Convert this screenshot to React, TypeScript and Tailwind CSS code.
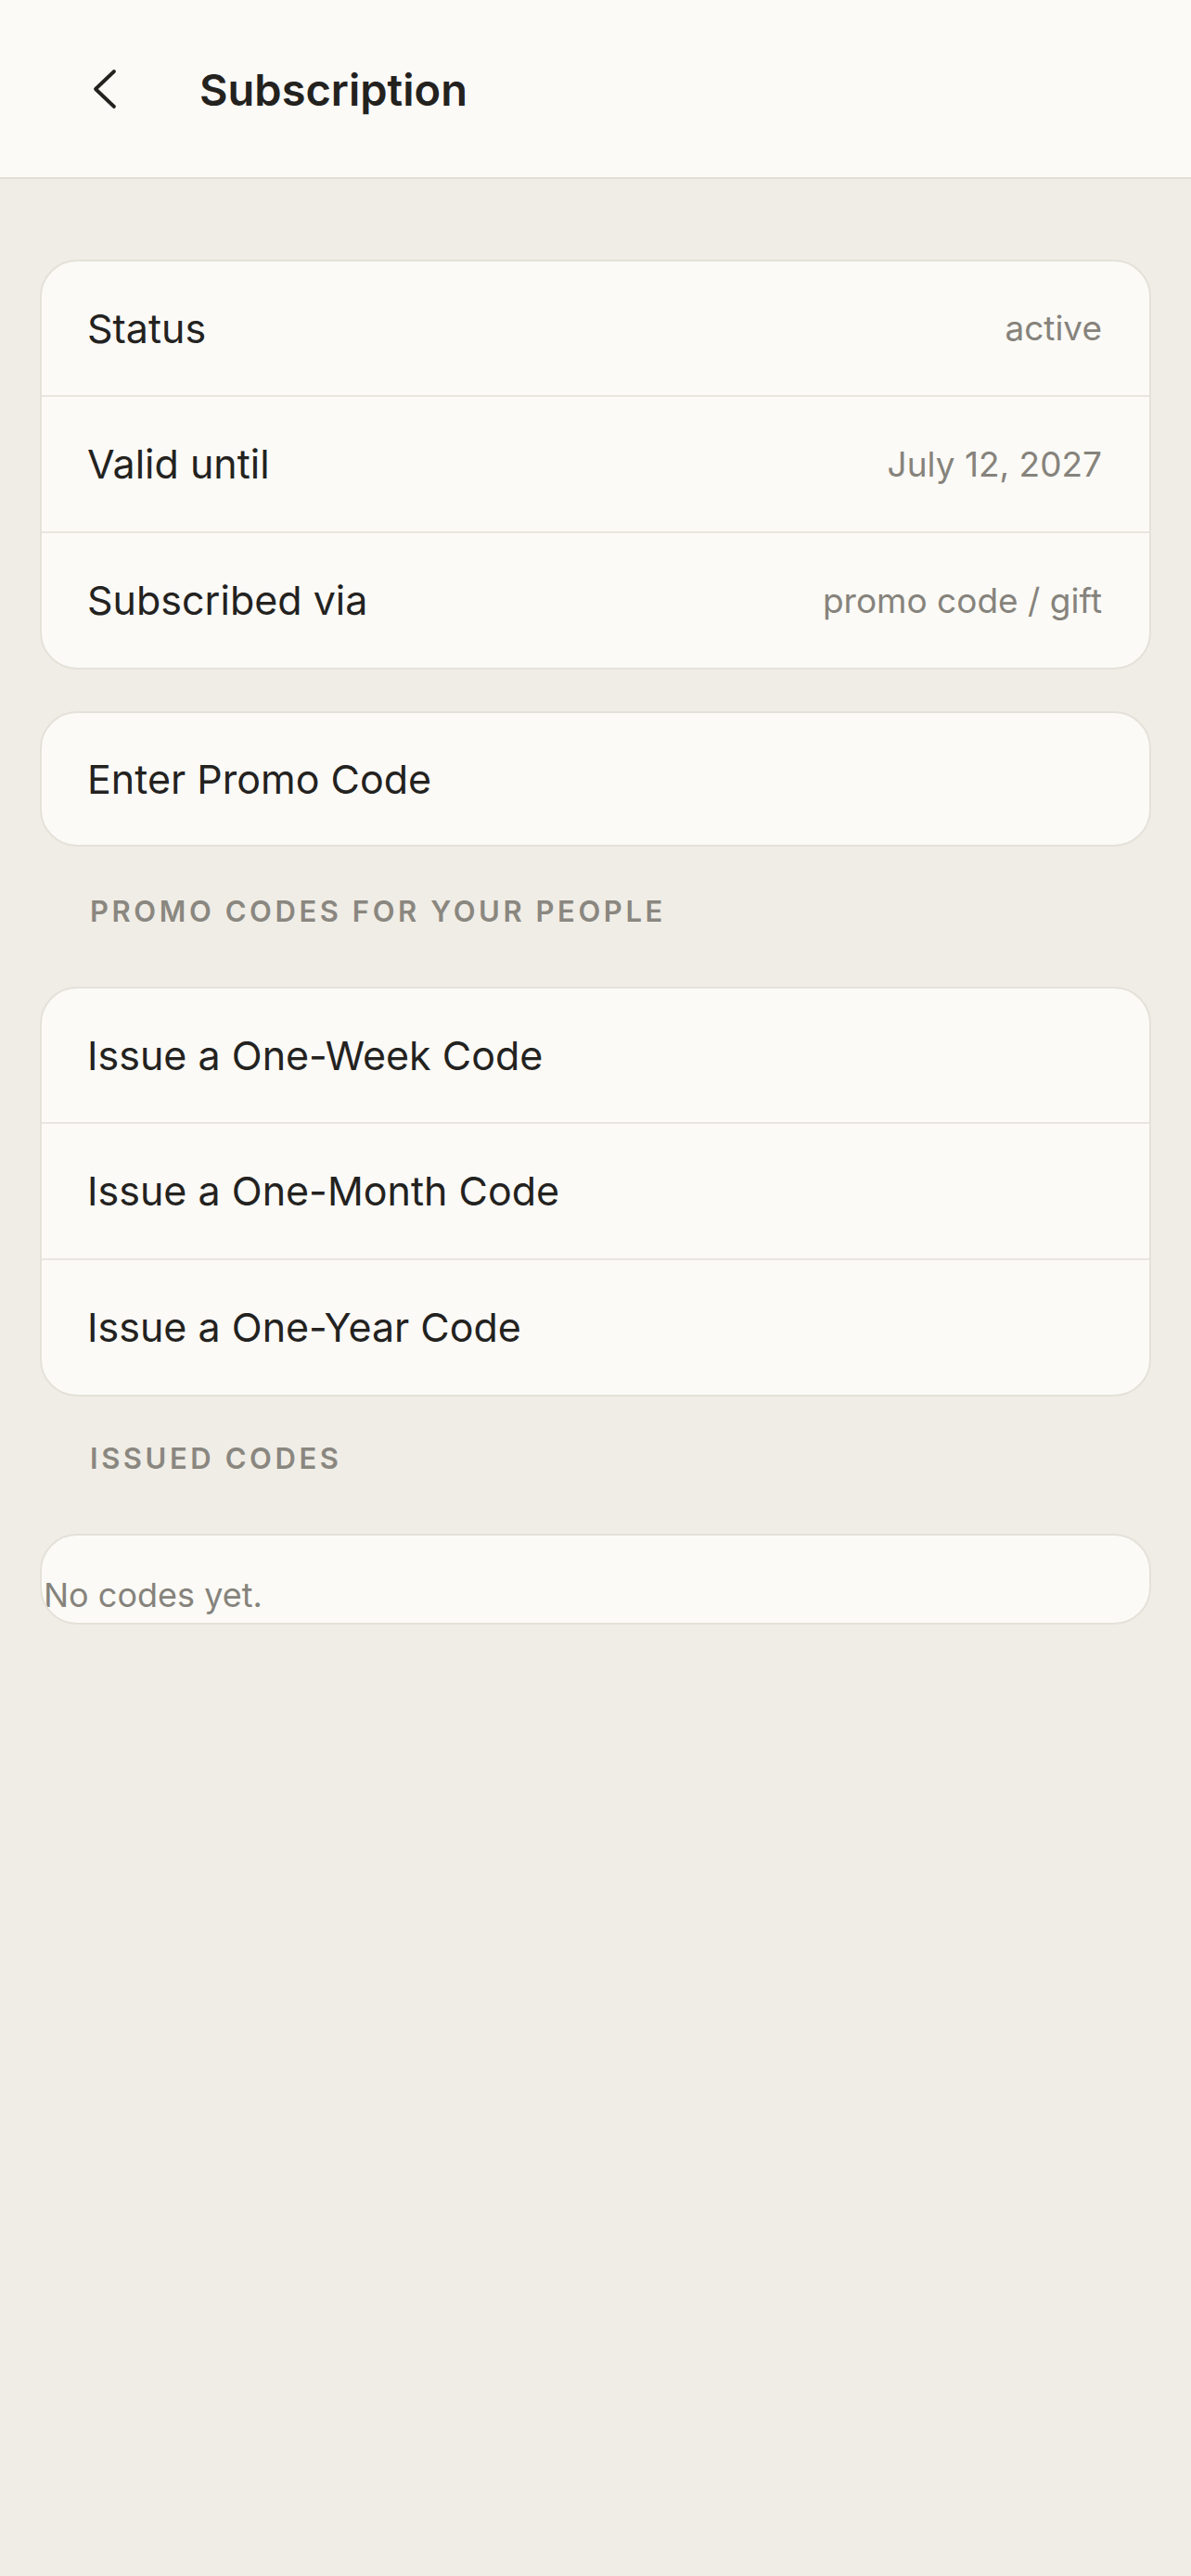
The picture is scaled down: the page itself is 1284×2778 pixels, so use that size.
import React from "react"

type InfoRow = { label: string; value?: string }

const statusRows: InfoRow[] = [
    { label: "Status", value: "active" },
    { label: "Valid until", value: "July 12, 2027" },
    { label: "Subscribed via", value: "promo code / gift" },
]

const issueRows: InfoRow[] = [
    { label: "Issue a One-Week Code" },
    { label: "Issue a One-Month Code" },
    { label: "Issue a One-Year Code" },
]

function BackIcon() {
    return (
        <svg width="28" height="48" viewBox="0 0 28 48" fill="none" className="shrink-0">
            <polyline
                points="24,5 4,24 24,43"
                stroke="#23221f"
                strokeWidth="3.8"
                strokeLinecap="round"
                strokeLinejoin="round"
            />
        </svg>
    )
}

function Card({ rows }: { rows: InfoRow[] }) {
    return (
        <div className="bg-[#fbfaf6] border-2 border-[#e4e1d9] rounded-[40px] overflow-hidden">
            {rows.map((row, i) => (
                <div
                    key={row.label}
                    className={
                        i === 0
                            ? "h-[144px] flex items-center justify-between pl-[49px] pr-[51px]"
                            : "h-[147px] border-t-2 border-[#e9e6df] flex items-center justify-between pl-[49px] pr-[51px]"
                    }
                >
                    <span className="text-[43px] text-[#23221f]">{row.label}</span>
                    {row.value && (
                        <span className="text-[37px] text-[#86837c]">{row.value}</span>
                    )}
                </div>
            ))}
        </div>
    )
}

function SectionLabel({ children, top }: { children: React.ReactNode; top: string }) {
    return (
        <div className={`${top} pb-[63px] pl-[54px] leading-[37px] text-[31px] font-semibold tracking-[0.115em] text-[#8a8780]`}>
            {children}
        </div>
    )
}

export default function App() {
    return (
        <div className="min-h-screen bg-[#f0ede6] font-[Inter,sans-serif]">
            <header className="h-[193px] bg-[#fbfaf7] border-b-2 border-[#e2dfd7] flex items-center pl-[99px]">
                <BackIcon />
                <h1 className="ml-[88px] pt-[3px] text-[47px] font-semibold text-[#23221f]">
                    Subscription
                </h1>
            </header>

            <main className="px-[43px] pt-[87px]">
                <Card rows={statusRows} />

                <div className="mt-[45px] h-[146px] bg-[#fbfaf6] border-2 border-[#e4e1d9] rounded-[40px] flex items-center pl-[49px]">
                    <span className="text-[43px] text-[#23221f]">Enter Promo Code</span>
                </div>

                <SectionLabel top="pt-[51px]">PROMO CODES FOR YOUR PEOPLE</SectionLabel>

                <Card rows={issueRows} />

                <SectionLabel top="pt-[48px]">ISSUED CODES</SectionLabel>

                <div className="bg-[#fbfaf6] border-2 border-[#e4e1d9] rounded-[40px] overflow-hidden pt-[43px] pb-[9px] pl-[2px]">
                    <p className="text-[36px] leading-[42px] text-[#86837c]">No codes yet.</p>
                </div>
            </main>
        </div>
    )
}
